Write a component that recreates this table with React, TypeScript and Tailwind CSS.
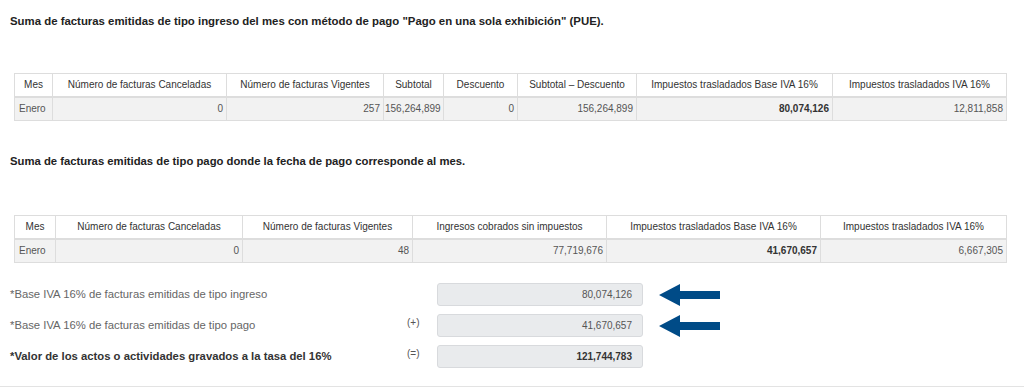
import React from "react";

const font = { fontFamily: '"Liberation Sans", Arial, sans-serif' };

function Arrow() {
  return (
    <svg width="62" height="24" viewBox="0 0 62 24" className="block">
      <polygon points="0,12 21,1 21,8 61,8 61,16 21,16 21,23" fill="#004b87" />
    </svg>
  );
}

export default function App() {
  const h1 = ["Mes", "Número de facturas Canceladas", "Número de facturas Vigentes", "Subtotal", "Descuento", "Subtotal – Descuento", "Impuestos trasladados Base IVA 16%", "Impuestos trasladados IVA 16%"];
  const w1 = [38, 174, 157, 60, 74, 119, 196, 174];
  const r1 = ["Enero", "0", "257", "156,264,899", "0", "156,264,899", "80,074,126", "12,811,858"];
  const h2 = ["Mes", "Número de facturas Canceladas", "Número de facturas Vigentes", "Ingresos cobrados sin impuestos", "Impuestos trasladados Base IVA 16%", "Impuestos trasladados IVA 16%"];
  const w2 = [41, 187, 170, 194, 214, 186];
  const r2 = ["Enero", "0", "48", "77,719,676", "41,670,657", "6,667,305"];

  const Table = ({ h, w, r, bold }: { h: string[]; w: number[]; r: string[]; bold: number }) => (
    <table className="table-fixed border-collapse w-[992px] ml-[4px] text-[10px]">
      <colgroup>
        {w.map((x, i) => (
          <col key={i} style={{ width: x }} />
        ))}
      </colgroup>
      <thead>
        <tr className="h-[23px] bg-white">
          {h.map((t, i) => (
            <th key={i} className="border border-[#dddddd] border-b-2 font-normal text-[#333333] text-center px-[4px] whitespace-nowrap">
              {t}
            </th>
          ))}
        </tr>
      </thead>
      <tbody>
        <tr className="h-[24px] bg-[#f2f2f2]">
          {r.map((t, i) => (
            <td
              key={i}
              className={`border border-[#dddddd] whitespace-nowrap ${i === 0 ? "text-left pl-[4px] pr-[2px]" : "text-right pl-[1px] pr-[3px]"} ${i === bold ? "font-bold text-[#333333]" : "text-[#555555]"}`}
            >
              {t}
            </td>
          ))}
        </tr>
      </tbody>
    </table>
  );

  return (
    <div style={font} className="w-[1024px] h-[387px] bg-white overflow-hidden relative">
      <div className="px-[10px]">
        <div className="pt-[13px] h-[73px] text-[11.4px] font-bold text-[#222222]">
          Suma de facturas emitidas de tipo ingreso del mes con método de pago "Pago en una sola exhibición" (PUE).
        </div>
        <Table h={h1} w={w1} r={r1} bold={6} />
        <div className="pt-[32px] h-[94px] text-[11.3px] font-bold text-[#222222]">
          Suma de facturas emitidas de tipo pago donde la fecha de pago corresponde al mes.
        </div>
        <Table h={h2} w={w2} r={r2} bold={4} />
        <div className="mt-[20px] flex flex-col gap-[8px]">
          {[
            { l: "*Base IVA 16% de facturas emitidas de tipo ingreso", s: "", v: "80,074,126", b: false, a: true },
            { l: "*Base IVA 16% de facturas emitidas de tipo pago", s: "(+)", v: "41,670,657", b: false, a: true },
            { l: "*Valor de los actos o actividades gravados a la tasa del 16%", s: "(=)", v: "121,744,783", b: true, a: false },
          ].map((row, i) => (
            <div key={i} className="flex items-center h-[23px]">
              <div className={`w-[390px] text-[11.3px] ${row.b ? "font-bold text-[#333333]" : "text-[#666666]"}`}>{row.l}</div>
              <div className="w-[37px] text-[10px] text-[#555555] -mt-[6px] pl-[7px]">{row.s}</div>
              <div
                className={`w-[206px] h-[23px] rounded-[3px] bg-[#e9ebed] border border-[#d8dadd] flex items-center justify-end pr-[10px] text-[10px] ${row.b ? "font-bold text-[#333333]" : "text-[#555555]"}`}
              >
                {row.v}
              </div>
              <div className="ml-[16px]">{row.a ? <Arrow /> : null}</div>
            </div>
          ))}
        </div>
      </div>
      <div className="absolute left-0 right-0 bottom-0 h-[1px] bg-[#e3e3e3]" />
    </div>
  );
}
